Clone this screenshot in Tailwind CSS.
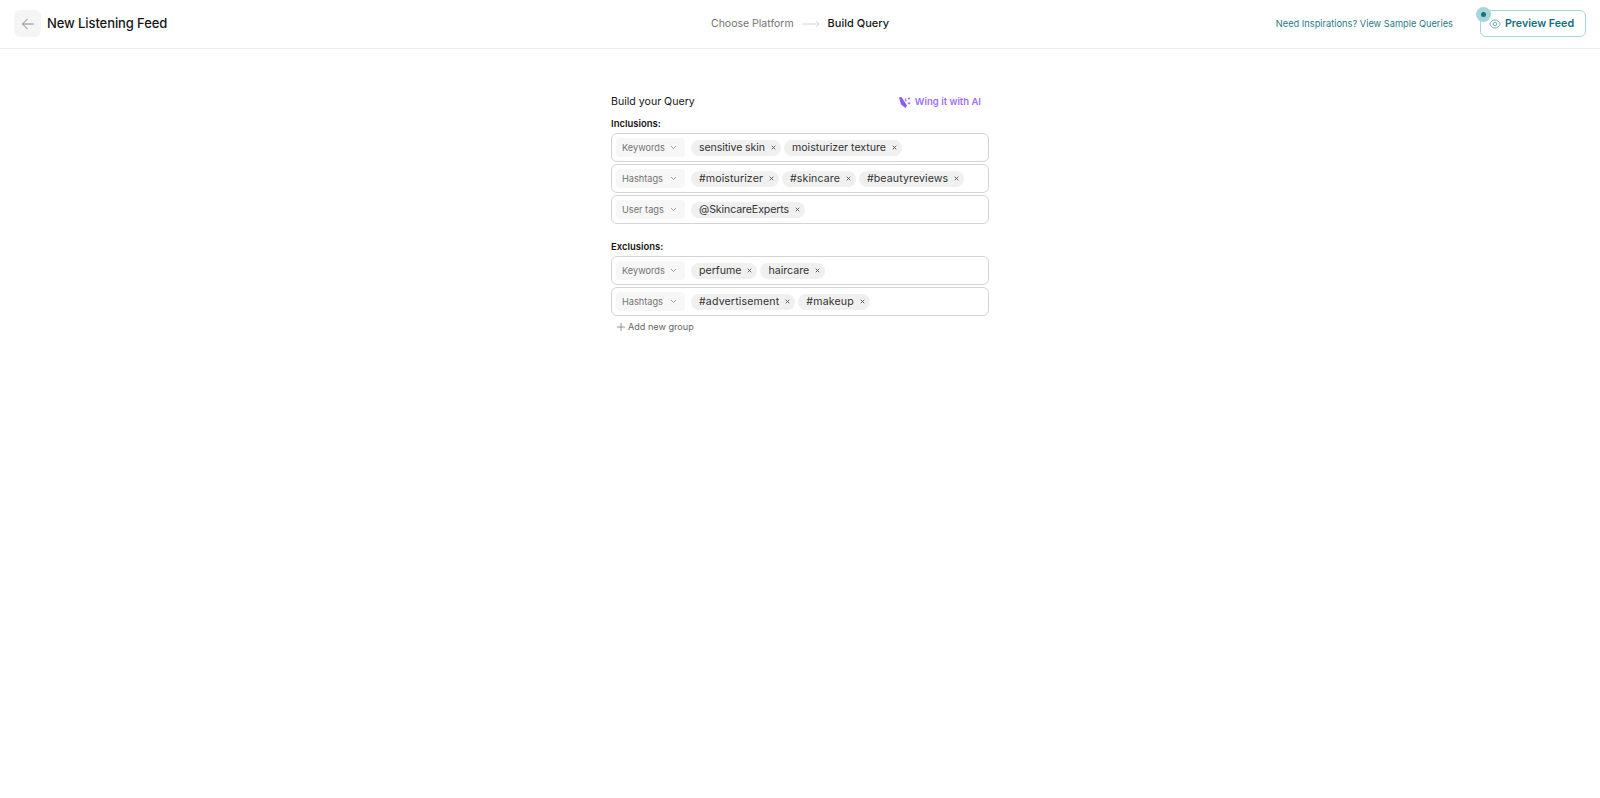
<!DOCTYPE html>
<html lang="en">
<head>
  <meta charset="UTF-8">
  <title>New Listening Feed</title>
  <script src="https://cdn.jsdelivr.net/npm/@tailwindcss/browser@4"></script>
</head>
<body class="bg-white min-h-screen font-['Inter',sans-serif] text-[#171717]">
  <!-- Header -->
  <header class="grid grid-cols-[1fr_auto_1fr] items-center h-[49px] pb-px pl-[14px] pr-[14px] border-b border-[#ececec]">
    <div class="flex items-center gap-[6px]">
      <button class="w-[27px] h-[27px] rounded-md bg-[#f5f5f5] flex items-center justify-center">
        <svg width="14" height="14" viewBox="0 0 14 14" fill="none" stroke="#8a8a8a" stroke-width="1"><path d="M13 7H1.500M6.500 2 1.500 7l5 5"/></svg>
      </button>
      <h1 class="text-[13px] font-medium tracking-[-0.1px]">New Listening Feed</h1>
    </div>
    <div class="flex items-center gap-[8px]">
      <span class="text-[10.5px] text-[#737373]">Choose Platform</span>
      <svg width="18" height="8" viewBox="0 0 18 8" fill="none" stroke="#d4d4d4" stroke-width="1"><path d="M0 4h17M14 1l3 3-3 3"/></svg>
      <span class="text-[11px] font-medium">Build Query</span>
    </div>
    <div class="flex items-center justify-end gap-[27px]">
      <a href="#" class="text-[9.25px] text-[#1f7a85]">Need Inspirations? View Sample Queries</a>
      <button class="relative w-[106px] h-[27px] pt-px pr-[3px] rounded-md border border-[#a9d5da] flex items-center justify-center gap-[4px] text-[#11707c] text-[10.7px] font-semibold">
        <span class="absolute -left-[5px] -top-[4px] w-[15px] h-[15px] rounded-full bg-[#a9d5da] flex items-center justify-center">
          <span class="w-[5px] h-[5px] rounded-full bg-[#0e7480]"></span>
        </span>
        <svg width="12" height="10" viewBox="0 0 12 10" fill="none" stroke="#4f9aa4" stroke-width="0.8"><path d="M.7 5C2 2.400 3.800 1 6 1s4 1.400 5.300 4C10 7.600 8.200 9 6 9S2 7.600.7 5Z"/><circle cx="6" cy="5" r="1.800"/></svg>
        Preview Feed
      </button>
    </div>
  </header>

  <!-- Query builder -->
  <main class="w-[378px] mx-auto pt-[45px]">
    <div class="flex items-center justify-between pr-[8px] h-[16px]">
      <h2 class="text-[10.6px]">Build your Query</h2>
      <button class="flex items-center gap-[4px] text-[9.5px] font-semibold text-[#a06ef5]">
        <svg width="13" height="13" viewBox="0 0 13 13" fill="#8b5cf6"><path d="M1 1.500 3.500 1 9 9.500 7.500 12 3 8.500Z"/><path d="M6.500 3.500 8 1.500l.5 3-1 1.500Z" opacity=".7"/><circle cx="11" cy="2.500" r=".9"/><path d="M11 5.500l.5 1.200 1.200.5-1.200.5-.5 1.200-.5-1.200-1.200-.5 1.200-.5Z"/></svg>
        Wing it with AI
      </button>
    </div>

    <h3 class="text-[9.5px] font-semibold mt-[8px] mb-[3px] h-[12px] leading-[12px]">Inclusions:</h3>
    <div class="flex flex-col gap-[2px]">
      <div class="flex items-center gap-[6px] h-[29px] px-[4px] border border-[#d4d4d4] rounded-md">
        <div class="w-[69px] h-[19px] shrink-0 rounded-sm bg-[#f7f7f7] flex items-center justify-between pl-[6px] pr-[8px] text-[9.2px] text-[#737373]">Keywords <svg width="7" height="5" viewBox="0 0 7 5" fill="none" stroke="#8a8a8a" stroke-width=".8"><path d="m1 1 2.500 2.500L6 1"/></svg></div>
        <div class="flex items-center gap-[3px]">
          <span class="h-[16px] rounded-full bg-[#f0f0f0] pl-[8px] pr-[5px] flex items-center gap-[6px] text-[10.6px] tracking-[-0.1px] text-[#333]">sensitive skin <svg width="5" height="5" viewBox="0 0 5 5" stroke="#555" stroke-width=".9"><path d="m.7.700 3.600 3.600M4.300.700.700 4.300"/></svg></span>
          <span class="h-[16px] rounded-full bg-[#f0f0f0] pl-[8px] pr-[5px] flex items-center gap-[6px] text-[10.6px] text-[#333]">moisturizer texture <svg width="5" height="5" viewBox="0 0 5 5" stroke="#555" stroke-width=".9"><path d="m.7.700 3.600 3.600M4.300.700.700 4.300"/></svg></span>
        </div>
      </div>
      <div class="flex items-center gap-[6px] h-[29px] px-[4px] border border-[#d4d4d4] rounded-md">
        <div class="w-[69px] h-[19px] shrink-0 rounded-sm bg-[#f7f7f7] flex items-center justify-between pl-[6px] pr-[8px] text-[9.2px] text-[#737373]">Hashtags <svg width="7" height="5" viewBox="0 0 7 5" fill="none" stroke="#8a8a8a" stroke-width=".8"><path d="m1 1 2.500 2.500L6 1"/></svg></div>
        <div class="flex items-center gap-[3px]">
          <span class="h-[16px] rounded-full bg-[#f0f0f0] pl-[8px] pr-[5px] flex items-center gap-[6px] text-[10.6px] tracking-[0.1px] text-[#333]">#moisturizer <svg width="5" height="5" viewBox="0 0 5 5" stroke="#555" stroke-width=".9"><path d="m.7.700 3.600 3.600M4.300.700.700 4.300"/></svg></span>
          <span class="h-[16px] rounded-full bg-[#f0f0f0] pl-[8px] pr-[5px] flex items-center gap-[6px] text-[10.6px] tracking-[0.1px] text-[#333]">#skincare <svg width="5" height="5" viewBox="0 0 5 5" stroke="#555" stroke-width=".9"><path d="m.7.700 3.600 3.600M4.300.700.700 4.300"/></svg></span>
          <span class="h-[16px] rounded-full bg-[#f0f0f0] pl-[8px] pr-[5px] flex items-center gap-[6px] text-[10.6px] tracking-[0.1px] text-[#333]">#beautyreviews <svg width="5" height="5" viewBox="0 0 5 5" stroke="#555" stroke-width=".9"><path d="m.7.700 3.600 3.600M4.300.700.700 4.300"/></svg></span>
        </div>
      </div>
      <div class="flex items-center gap-[6px] h-[29px] px-[4px] border border-[#d4d4d4] rounded-md">
        <div class="w-[69px] h-[19px] shrink-0 rounded-sm bg-[#f7f7f7] flex items-center justify-between pl-[6px] pr-[8px] text-[9.2px] text-[#737373]">User tags <svg width="7" height="5" viewBox="0 0 7 5" fill="none" stroke="#8a8a8a" stroke-width=".8"><path d="m1 1 2.500 2.500L6 1"/></svg></div>
        <div class="flex items-center gap-[3px]">
          <span class="h-[16px] rounded-full bg-[#f0f0f0] pl-[8px] pr-[5px] flex items-center gap-[6px] text-[10.6px] tracking-[-0.1px] text-[#333]">@SkincareExperts <svg width="5" height="5" viewBox="0 0 5 5" stroke="#555" stroke-width=".9"><path d="m.7.700 3.600 3.600M4.300.700.700 4.300"/></svg></span>
        </div>
      </div>
    </div>

    <h3 class="text-[9.5px] font-semibold mt-[17px] mb-[3px] h-[12px] leading-[12px]">Exclusions:</h3>
    <div class="flex flex-col gap-[2px]">
      <div class="flex items-center gap-[6px] h-[29px] px-[4px] border border-[#d4d4d4] rounded-md">
        <div class="w-[69px] h-[19px] shrink-0 rounded-sm bg-[#f7f7f7] flex items-center justify-between pl-[6px] pr-[8px] text-[9.2px] text-[#737373]">Keywords <svg width="7" height="5" viewBox="0 0 7 5" fill="none" stroke="#8a8a8a" stroke-width=".8"><path d="m1 1 2.500 2.500L6 1"/></svg></div>
        <div class="flex items-center gap-[3px]">
          <span class="h-[16px] rounded-full bg-[#f0f0f0] pl-[8px] pr-[5px] flex items-center gap-[6px] text-[10.6px] text-[#333]">perfume <svg width="5" height="5" viewBox="0 0 5 5" stroke="#555" stroke-width=".9"><path d="m.7.700 3.600 3.600M4.300.700.700 4.300"/></svg></span>
          <span class="h-[16px] rounded-full bg-[#f0f0f0] pl-[8px] pr-[5px] flex items-center gap-[6px] text-[10.6px] text-[#333]">haircare <svg width="5" height="5" viewBox="0 0 5 5" stroke="#555" stroke-width=".9"><path d="m.7.700 3.600 3.600M4.300.700.700 4.300"/></svg></span>
        </div>
      </div>
      <div class="flex items-center gap-[6px] h-[29px] px-[4px] border border-[#d4d4d4] rounded-md">
        <div class="w-[69px] h-[19px] shrink-0 rounded-sm bg-[#f7f7f7] flex items-center justify-between pl-[6px] pr-[8px] text-[9.2px] text-[#737373]">Hashtags <svg width="7" height="5" viewBox="0 0 7 5" fill="none" stroke="#8a8a8a" stroke-width=".8"><path d="m1 1 2.500 2.500L6 1"/></svg></div>
        <div class="flex items-center gap-[3px]">
          <span class="h-[16px] rounded-full bg-[#f0f0f0] pl-[8px] pr-[5px] flex items-center gap-[6px] text-[10.6px] tracking-[0.15px] text-[#333]">#advertisement <svg width="5" height="5" viewBox="0 0 5 5" stroke="#555" stroke-width=".9"><path d="m.7.700 3.600 3.600M4.300.700.700 4.300"/></svg></span>
          <span class="h-[16px] rounded-full bg-[#f0f0f0] pl-[8px] pr-[5px] flex items-center gap-[6px] text-[10.6px] tracking-[0.15px] text-[#333]">#makeup <svg width="5" height="5" viewBox="0 0 5 5" stroke="#555" stroke-width=".9"><path d="m.7.700 3.600 3.600M4.300.700.700 4.300"/></svg></span>
        </div>
      </div>
    </div>

    <button class="flex items-center gap-[3px] mt-[4px] ml-[6px] text-[9.1px] text-[#666]">
      <svg width="8" height="8" viewBox="0 0 8 8" fill="none" stroke="#777" stroke-width=".8"><path d="M4 0v8M0 4h8"/></svg>
      Add new group
    </button>
  </main>
</body>
</html>
